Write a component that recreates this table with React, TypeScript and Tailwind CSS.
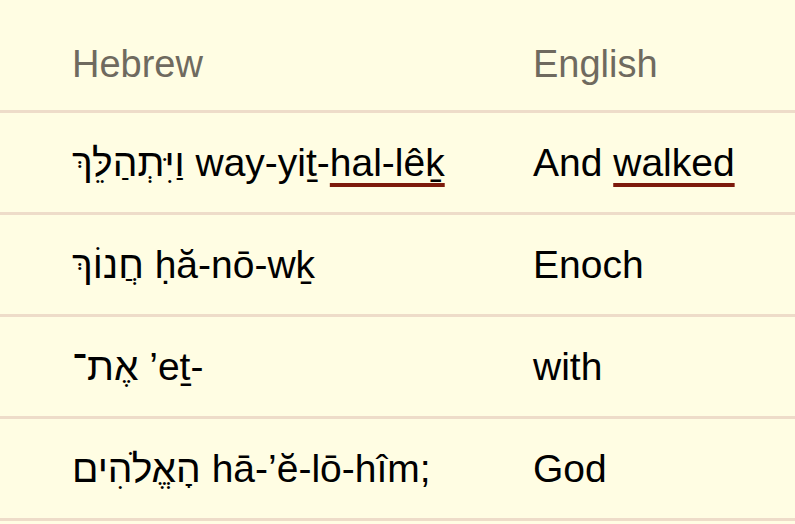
const rows = [
    { he: 'וַיִּתְהַלֵּךְ', tr: ['way-yiṯ-', 'hal-lêḵ'], en: ['And ', 'walked'] },
    { he: 'חֲנוֹךְ', tr: ['ḥă-nō-wḵ', ''], en: ['Enoch', ''] },
    { he: 'אֶת־', tr: ['’eṯ-', ''], en: ['with', ''] },
    { he: 'הָאֱלֹהִים', tr: ['hā-’ĕ-lō-hîm;', ''], en: ['God', ''] },
];

function Mark({ children }: { children: string }) {
    if (!children) return null;
    return (
        <span className="underline decoration-[#7d1a0b] decoration-[4px] underline-offset-[7px]">{children}</span>
    );
}

export default function App() {
    return (
        <div className="w-[795px] h-[524px] bg-[#fffde3] font-['Liberation_Sans',Arial,sans-serif] text-[38px] leading-[44px] overflow-hidden">
            {/* header */}
            <div className="flex h-[113px] border-b-[3px] border-[#eedcc9] pt-[42px] text-[#6f6a5f]">
                <div className="w-[533px] pl-[72px]">Hebrew</div>
                <div>English</div>
            </div>

            {rows.map((r, i) => (
                <div key={i} className="flex items-center h-[102px] border-b-[3px] border-[#eedcc9] text-black text-[39px]">
                    <div className="w-[533px] pl-[72px] whitespace-nowrap">
                        <span>{r.he}</span> {r.tr[0]}
                        <Mark>{r.tr[1]}</Mark>
                    </div>
                    <div className="whitespace-pre">
                        {r.en[0]}
                        <Mark>{r.en[1]}</Mark>
                    </div>
                </div>
            ))}
        </div>
    );
}
